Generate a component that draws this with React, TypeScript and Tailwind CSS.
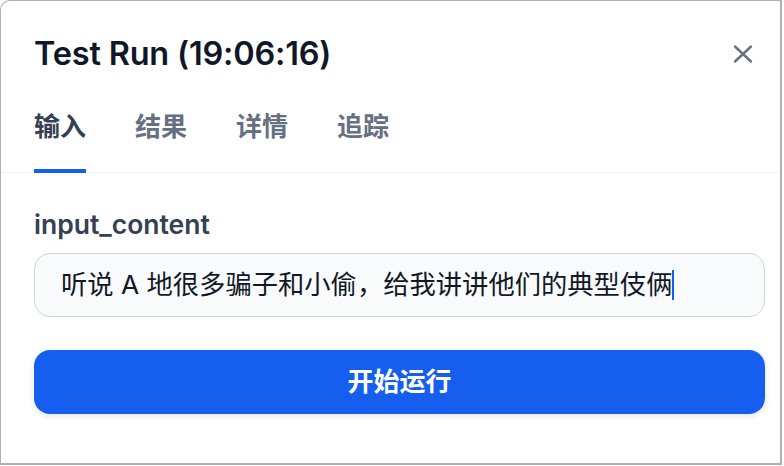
const tabs = ['输入', '结果', '详情', '追踪'];

export default function App() {
  return (
    <div
      className="w-[784px] h-[466px] bg-white"
      style={{ fontFamily: 'Inter, "Noto Sans CJK SC", sans-serif' }}
    >
      <div className="w-[782px] h-[465px] bg-white border border-[#b0b0b0] border-r-2 border-b-2 rounded-tl-[10px] flex flex-col">
        {/* header */}
        <div className="flex items-center justify-between pl-[33px] pr-[27px] pt-[33px]">
          <h1 className="text-[32.5px] leading-[40px] font-semibold text-[#101828] tracking-[-0.2px]">
            Test Run (19:06:16)
          </h1>
          <button className="w-[20px] h-[20px] flex items-center justify-center text-[#676f83]">
            <svg width="20" height="20" viewBox="0 0 20 20" fill="none">
              <path d="M2 2.5L18 17.5M18 2.5L2 17.5" stroke="currentColor" strokeWidth="2.4" strokeLinecap="round" />
            </svg>
          </button>
        </div>

        {/* tabs */}
        <div className="flex gap-[49px] px-[33px] mt-[37px] border-b border-[#f0f2f5]">
          {tabs.map((t, i) => (
            <div key={t} className="flex flex-col">
              <span
                className={
                  'text-[26px] leading-[32px] font-semibold pb-[26px] ' +
                  (i === 0 ? 'text-[#354052]' : 'text-[#676f83]')
                }
              >
                {t}
              </span>
              <div className={'h-[4px] -mb-px ' + (i === 0 ? 'bg-[#155eef]' : 'bg-transparent')} />
            </div>
          ))}
        </div>

        {/* form */}
        <div className="flex flex-col pl-[33px] pr-[15px] pt-[35px]">
          <label className="text-[26.5px] leading-[32px] font-semibold text-[#354052]">input_content</label>
          <div className="mt-[13px] h-[64px] rounded-[16px] border border-[#d0d5dc] bg-[#f9fafb] flex items-center pl-[26px]">
            <span className="text-[26.3px] leading-[32px] text-[#101828]">
              听说 A 地很多骗子和小偷，给我讲讲他们的典型伎俩
            </span>
            <span className="w-[2px] h-[30px] bg-[#155eef]" />
          </div>
          <button className="mt-[33px] h-[64px] rounded-[16px] bg-[#155eef] text-white text-[26px] leading-[32px] font-semibold shadow-[0_2px_6px_rgba(16,24,40,0.12)] flex items-center justify-center">
            开始运行
          </button>
        </div>
      </div>
    </div>
  );
}
